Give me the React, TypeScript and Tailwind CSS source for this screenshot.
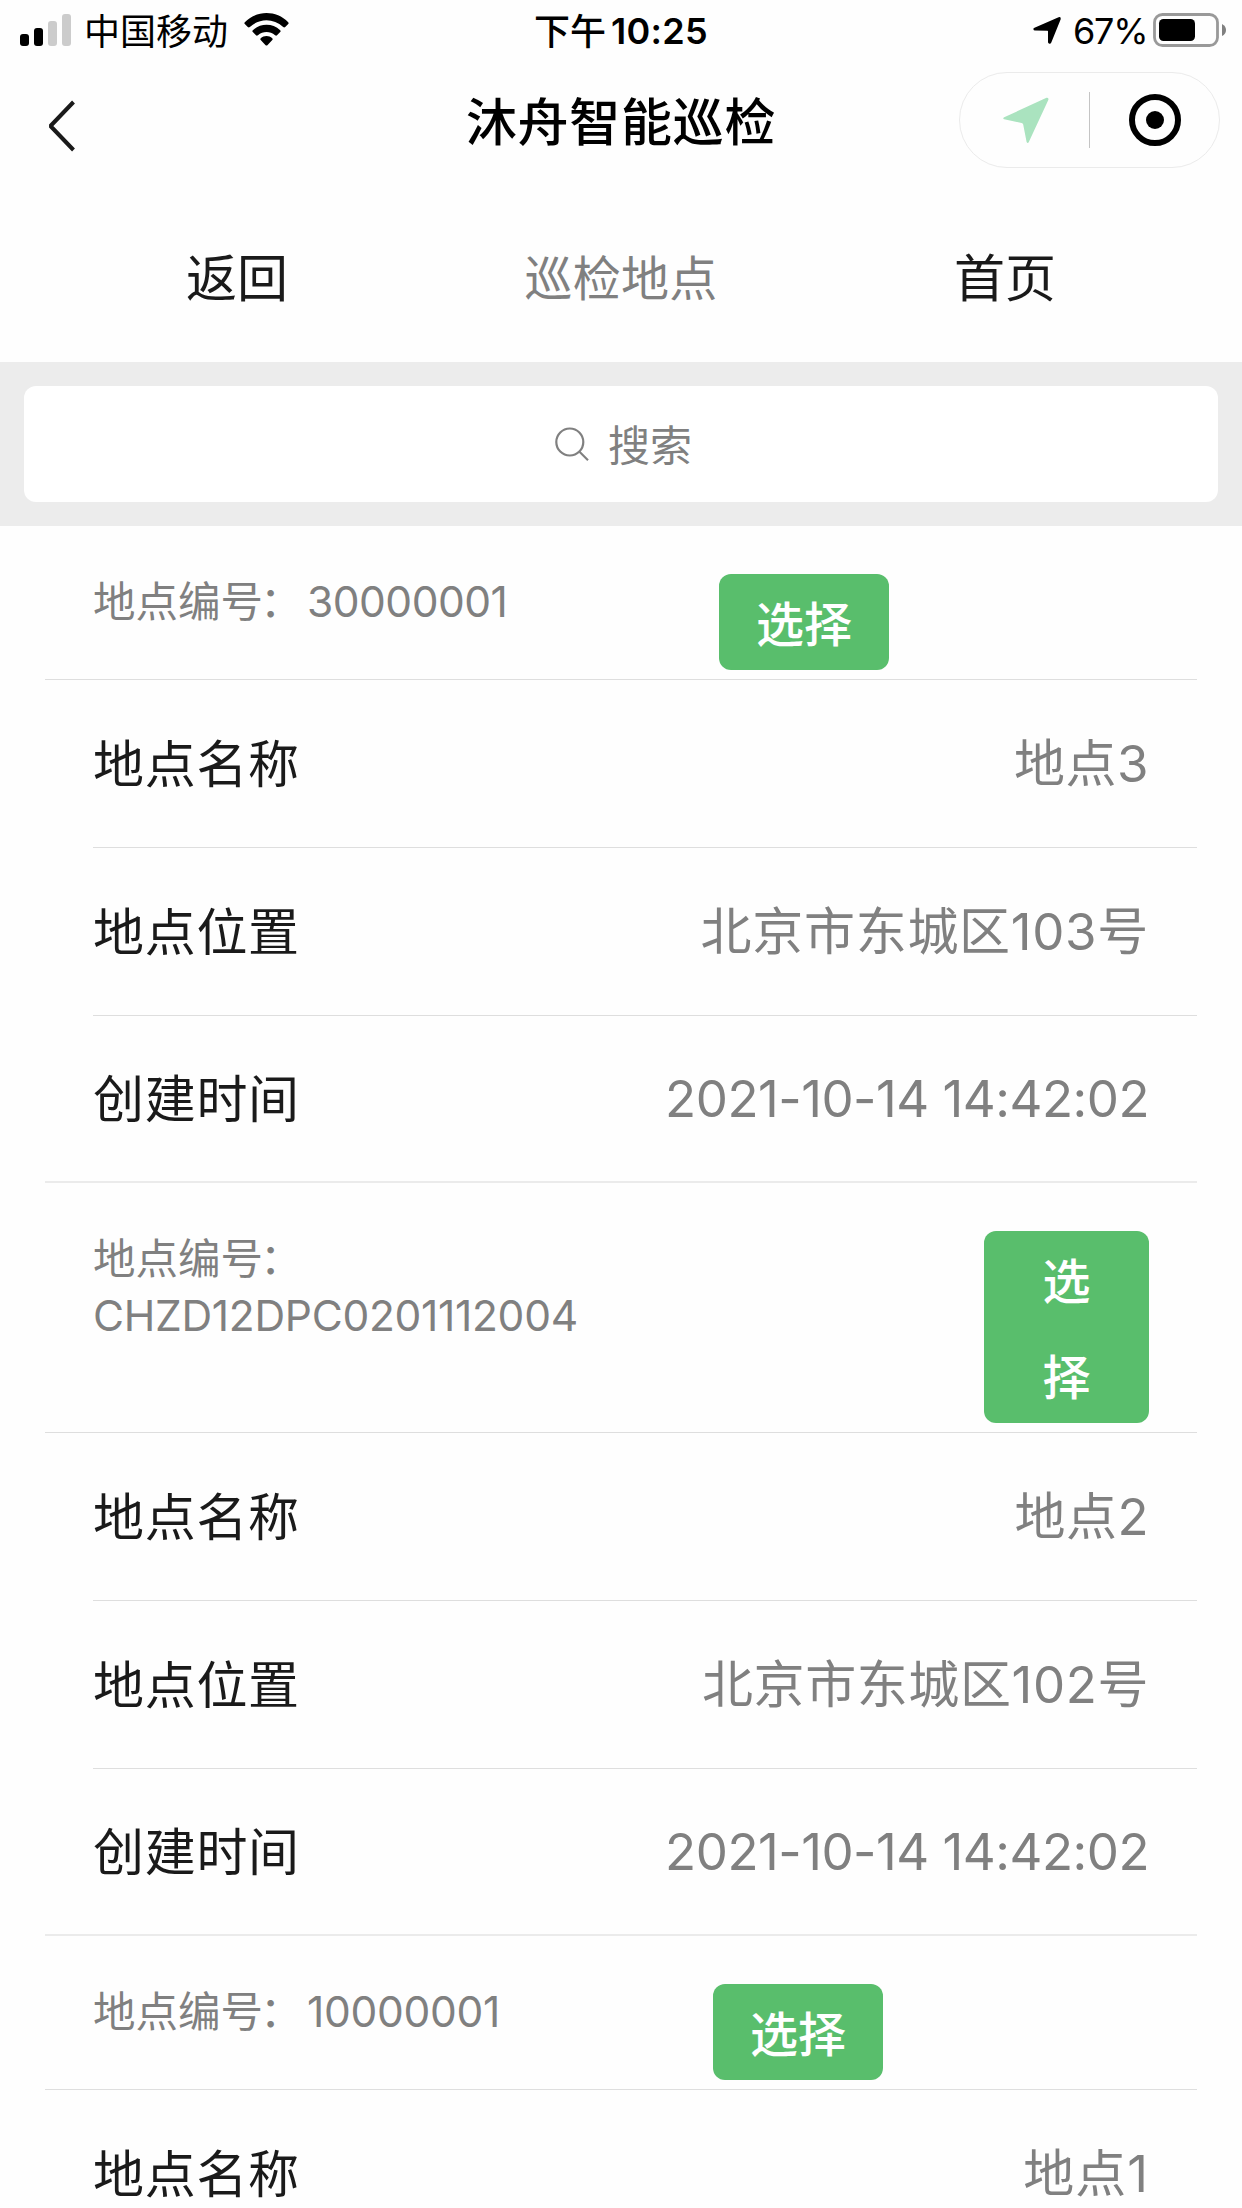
type Site = {
  code: string;
  details: { label: string; value: string; valueClass: string }[];
  textClass: string;
  codeClass: string;
  buttonClass: string;
};

const sites: Site[] = [
  {
    code: '30000001',
    details: [
      { label: '地点名称', value: '地点3', valueClass: 'tracking-[0.5px]' },
      { label: '地点位置', value: '北京市东城区103号', valueClass: 'tracking-[0.7px]' },
      { label: '创建时间', value: '2021-10-14 14:42:02', valueClass: 'tracking-[-0.5px]' },
    ],
    textClass: 'w-[626px]',
    codeClass: 'tracking-[-0.5px]',
    buttonClass: 'w-[170px]',
  },
  {
    code: 'CHZD12DPC0201112004',
    details: [
      { label: '地点名称', value: '地点2', valueClass: 'tracking-[0.5px]' },
      { label: '地点位置', value: '北京市东城区102号', valueClass: 'tracking-[0.6px]' },
      { label: '创建时间', value: '2021-10-14 14:42:02', valueClass: 'tracking-[-0.5px]' },
    ],
    textClass: 'w-[891px]',
    codeClass: 'tracking-[-0.3px]',
    buttonClass: 'w-[165px] px-[50px]',
  },
  {
    code: '10000001',
    details: [{ label: '地点名称', value: '地点1', valueClass: 'tracking-[1px]' }],
    textClass: 'w-[620px]',
    codeClass: 'tracking-[-0.3px]',
    buttonClass: 'w-[170px]',
  },
];

function StatusBar() {
  return (
    <div className="flex h-[62px] items-start text-[36px] leading-[62px] text-black">
      <div className="flex w-[420px] pl-5">
        <svg className="mt-[14px] h-8 w-[52px]" viewBox="0 0 52 32">
          <rect x="0" y="20" width="9" height="12" rx="3" />
          <rect x="14" y="14" width="9" height="18" rx="3" />
          <rect x="28" y="7" width="9" height="25" rx="3" fill="#cccccc" />
          <rect x="42" y="0" width="9" height="32" rx="3" fill="#cccccc" />
        </svg>
        <span className="mt-px ml-[12px] w-[160px] whitespace-nowrap">中国移动</span>
        <svg className="mt-[13px] h-[33px] w-[45px]" viewBox="0 0 45 33">
          <path d="M0.8 9.2C12.5-3 32.500-3 44.200 9.200Q45 10.200 44.200 11L41.200 14Q40.200 14.800 39.200 14C29.500 5 15.500 5 5.800 14Q4.800 14.800 3.800 14L0.800 11Q0 10.200 0.800 9.200Z" />
          <path d="M8.800 17.300C16.500 10 28.500 10 36.200 17.300Q37 18.200 36.200 19.100L33 22.300Q32.100 23 31.100 22.200C26 17.800 19 17.800 13.900 22.200Q12.900 23 12 22.300L8.800 19.100Q8 18.200 8.800 17.300Z" />
          <path d="M16.700 25.300C20 22.300 25 22.300 28.300 25.300Q29.200 26.200 28.300 27.100L23.400 32.200Q22.500 33 21.600 32.200L16.700 27.100Q15.800 26.200 16.700 25.300Z" />
        </svg>
      </div>
      <div className="flex flex-1 justify-center whitespace-nowrap">
        <span className="mt-px font-medium">下午</span>
        <span className="ml-[5px] font-semibold tracking-[0.3px]">10:25</span>
      </div>
      <div className="flex w-[420px] justify-end pr-[15px]">
        <svg className="mt-[17px] h-[27px] w-[28px]" viewBox="0 0 28 27">
          <path d="M25.600 0.200Q28.200-0.300 27.600 2.400L18.300 25.600Q17.400 27.300 16 26.600Q15 26.200 15 25V14.200Q15 13.700 14.500 13.700L2 13.600Q0.600 13.500 0.400 12.300Q0.200 11.300 1.500 10.700Z" />
        </svg>
        <span className="ml-[12px] w-[73px] whitespace-nowrap tracking-[-1.2px]">67%</span>
        <svg className="ml-[7px] mt-[13px] h-[34px] w-[74px]" viewBox="0 0 74 34">
          <rect x="1.500" y="1.500" width="63" height="31" rx="8" fill="none" stroke="#999999" strokeWidth="2.800" />
          <rect x="6" y="6" width="36" height="22" rx="4.500" />
          <path d="M69 11Q73 13 73 17T69 23Z" fill="#808080" />
        </svg>
      </div>
    </div>
  );
}

function TitleBar() {
  return (
    <div className="grid h-[116px] grid-cols-[420px_1fr_420px] items-start text-black">
      <svg className="ml-[47px] mt-[37px] h-[54px] w-[30px]" viewBox="0 0 30 54" fill="none" stroke="#1a1a1a" strokeWidth="4">
        <path d="M26.500 3L3.500 27L26.500 51" strokeLinejoin="bevel" />
      </svg>
      <h1 className="mt-[25px] text-center text-[51px] leading-[72px] font-medium tracking-[0.7px] whitespace-nowrap">沐舟智能巡检</h1>
      <div className="mt-[10px] mr-[22px] ml-auto flex h-[96px] w-[261px] items-center rounded-full border border-[#ebebeb]">
        <svg className="ml-[43px] h-[47px] w-[46px]" viewBox="0 0 46 47" fill="#aae3bf">
          <path d="M43.500 0.700Q46 0.500 45.300 3L25.800 45Q24.800 46.800 23.600 45L20.200 27.500Q19.900 26.200 18.600 25.900L1.200 22.300Q-0.600 21.500 1.200 20.300Z" />
        </svg>
        <div className="ml-10 h-14 w-px bg-[#c4c4c4]" />
        <svg className="ml-[39px] h-[52px] w-[52px]" viewBox="0 0 52 52">
          <circle cx="26" cy="26" r="23" fill="none" stroke="black" strokeWidth="6" />
          <circle cx="26" cy="26" r="9" />
        </svg>
      </div>
    </div>
  );
}

function DetailRow({ label, value, valueClass, last }: { label: string; value: string; valueClass: string; last: boolean }) {
  return (
    <div className={last ? '' : 'pl-12'}>
      <div
        className={
          last
            ? 'flex h-[167px] items-center justify-between border-b-2 border-[#ebebeb] pr-12 pl-12'
            : 'flex h-[168px] items-center justify-between border-b border-[#dedede] pr-12'
        }
      >
        <span className="pt-[3px] text-[51px] leading-[72px] tracking-[0.7px] text-[#1a1a1a]">{label}</span>
        <span className={`${valueClass} pt-px text-[51px] leading-[72px] text-[#808080]`}>{value}</span>
      </div>
    </div>
  );
}

function SiteCard({ site }: { site: Site }) {
  return (
    <section className="mx-[45px]">
      <div className="flex items-start border-b border-[#dedede] pt-[47px] pr-12 pb-[9px] pl-12">
        <div className={`${site.textClass} shrink-0 text-[42.5px] leading-[57px] text-[#808080]`}>
          <div className={site.code.length > 8 ? 'w-[500px]' : 'whitespace-nowrap'}>
            <span className="inline-block w-[214px] whitespace-nowrap">
              地点编号<span className="-ml-[3px]">：</span>
            </span>
            <span className={`${site.codeClass} inline-block whitespace-nowrap`}>{site.code}</span>
          </div>
        </div>
        <button className={`${site.buttonClass} mt-px rounded-[12px] bg-[#59be6c] text-center text-[48px] font-medium text-white`}>
          <span className="-mb-[3px] block pt-[3px] leading-[96px]">选择</span>
        </button>
      </div>
      {site.details.map((detail, index) => (
        <DetailRow key={detail.label} {...detail} last={index === 2} />
      ))}
    </section>
  );
}

export default function App() {
  return (
    <div className="h-[2208px] w-[1242px] overflow-hidden bg-[#fefefe] font-['Inter','Noto_Sans_CJK_SC',sans-serif]">
      <StatusBar />
      <TitleBar />
      <nav className="grid h-[184px] grid-cols-3 px-[45px] pt-[65px] text-center leading-[72px]">
        <span className="text-[51px] text-[#1a1a1a]">返回</span>
        <span className="text-[48px] tracking-[0.3px] text-[#808080]">巡检地点</span>
        <span className="text-[51px] text-[#1a1a1a]">首页</span>
      </nav>
      <div className="bg-[#ececec] p-6">
        <div className="flex h-[116px] items-center justify-center rounded-[12px] bg-white pl-[5px] text-[42px] text-[#808080]">
          <svg className="mr-[19px] h-[34px] w-[34px]" viewBox="0 0 34 34" fill="none" stroke="#808080" strokeWidth="2.200">
            <circle cx="14.800" cy="15" r="13.500" />
            <path d="M24.500 24.800L33 33.200" />
          </svg>
          <span className="pt-0.5">搜索</span>
        </div>
      </div>
      {sites.map((site) => (
        <SiteCard key={site.code} site={site} />
      ))}
    </div>
  );
}
